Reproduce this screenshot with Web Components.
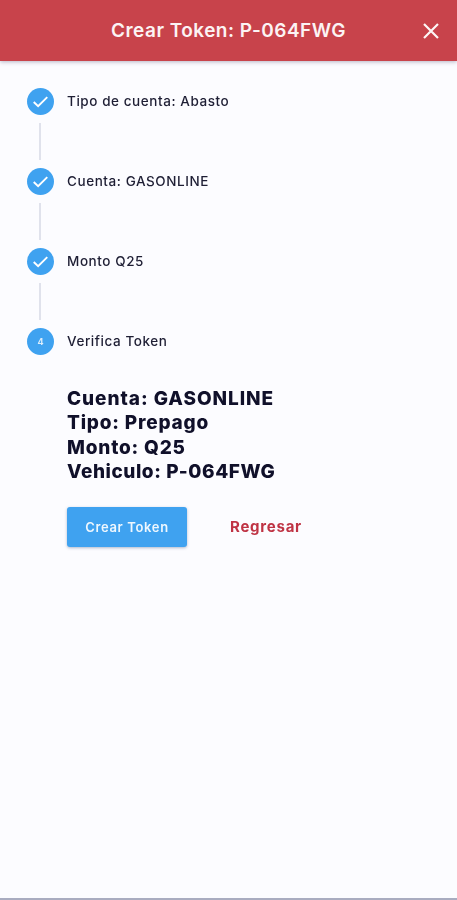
<!DOCTYPE html>
<html lang="es"><head><meta charset="utf-8"><title>Crear Token</title>
<style>
html,body{margin:0;padding:0;height:100%;background:#fcfcff}
body{font-family:Inter,"Noto Sans",sans-serif}
token-summary span{display:block}
token-summary span:nth-child(1){letter-spacing:.95px}
token-summary span:nth-child(4){letter-spacing:.55px}
</style></head><body>
<token-screen>
<app-header slot="header">Crear Token: P-064FWG</app-header>
<step-item done label="Tipo de cuenta: Abasto" line></step-item>
<step-item done label="Cuenta: GASONLINE" line></step-item>
<step-item done label="Monto Q25" line></step-item>
<step-item number="4" label="Verifica Token"></step-item>
<token-summary>
<span>Cuenta: GASONLINE</span><span>Tipo: Prepago</span><span>Monto: Q25</span><span>Vehiculo: P-064FWG</span>
</token-summary>
<action-row></action-row>
</token-screen>
<script>
function def(name,html){customElements.define(name,class extends HTMLElement{constructor(){super();this.attachShadow({mode:'open'}).innerHTML=html}})}
def('token-screen',`<style>
:host{display:flex;flex-direction:column;height:900px;box-sizing:border-box;border-bottom:2px solid #a9acc0;background:#fcfcff;overflow:hidden}
main{display:flex;flex-direction:column;padding:27px 0 0 27px;filter:blur(.3px)}
</style><slot name="header"></slot><main><slot></slot></main>`);
def('app-header',`<style>
:host{display:flex;align-items:center;justify-content:center;height:61px;flex:none;position:relative;background:#c8434b;color:#fcf3f4;box-shadow:0 1px 4px rgba(60,50,90,.35);font:600 19px/1 Inter,sans-serif;letter-spacing:.48px}
svg{position:absolute;right:17px;top:22px}
</style><span><slot></slot></span><svg width="18" height="18" viewBox="0 0 18 18" fill="none" stroke="#fdf6f6" stroke-width="2.2"><path d="M2 2 16 16M16 2 2 16"/></svg>`);
customElements.define('step-item',class extends HTMLElement{constructor(){super();this.attachShadow({mode:'open'})}
connectedCallback(){const done=this.hasAttribute('done'),line=this.hasAttribute('line');
this.shadowRoot.innerHTML=`<style>
:host{display:block;height:${line?80:27}px}
.r{display:flex;align-items:center;gap:13px;height:27px;font:500 13.5px/1 Inter,sans-serif;letter-spacing:.57px;color:#1e1e34}
.r span{padding-top:1px}
.c{width:27px;height:27px;border-radius:50%;background:#3fa2f0;display:flex;align-items:center;justify-content:center;color:#dcedfb;font:700 9px/1 Inter,sans-serif;letter-spacing:0;flex:none}
.l{width:2px;height:37px;margin:8px 0 0 12px;background:#e0e2ec}
</style><div class="r"><div class="c">${done?'<svg width="19" height="19" viewBox="0 0 16 16" fill="none" stroke="#fff" stroke-width="1.6"><path d="M2.3 8.4 6 12 13.7 4.3"/></svg>':this.getAttribute('number')}</div><span>${this.getAttribute('label')}</span></div>${line?'<div class="l"></div>':''}`}});
def('token-summary',`<style>
:host{display:flex;flex-direction:column;margin:32px 0 0 40px;font:800 19px/24.3px Inter,sans-serif;letter-spacing:.8px;color:#10102a}
</style><slot></slot>`);
def('action-row',`<style>
:host{display:flex;align-items:center;margin:23px 0 0 40px;gap:43px}
.a{width:120px;height:40px;border:0;border-radius:3px;background:#3fa2f0;color:#eef7fe;font:600 13px/1 Inter,sans-serif;letter-spacing:.65px;box-shadow:0 1px 3px rgba(30,60,110,.35);padding:0}
.b{border:0;background:none;padding:0 0 1px;color:#bf3344;font:700 15px/1 Inter,sans-serif;letter-spacing:.75px}
</style><button class="a">Crear Token</button><button class="b">Regresar</button>`);
</script>
</body></html>
